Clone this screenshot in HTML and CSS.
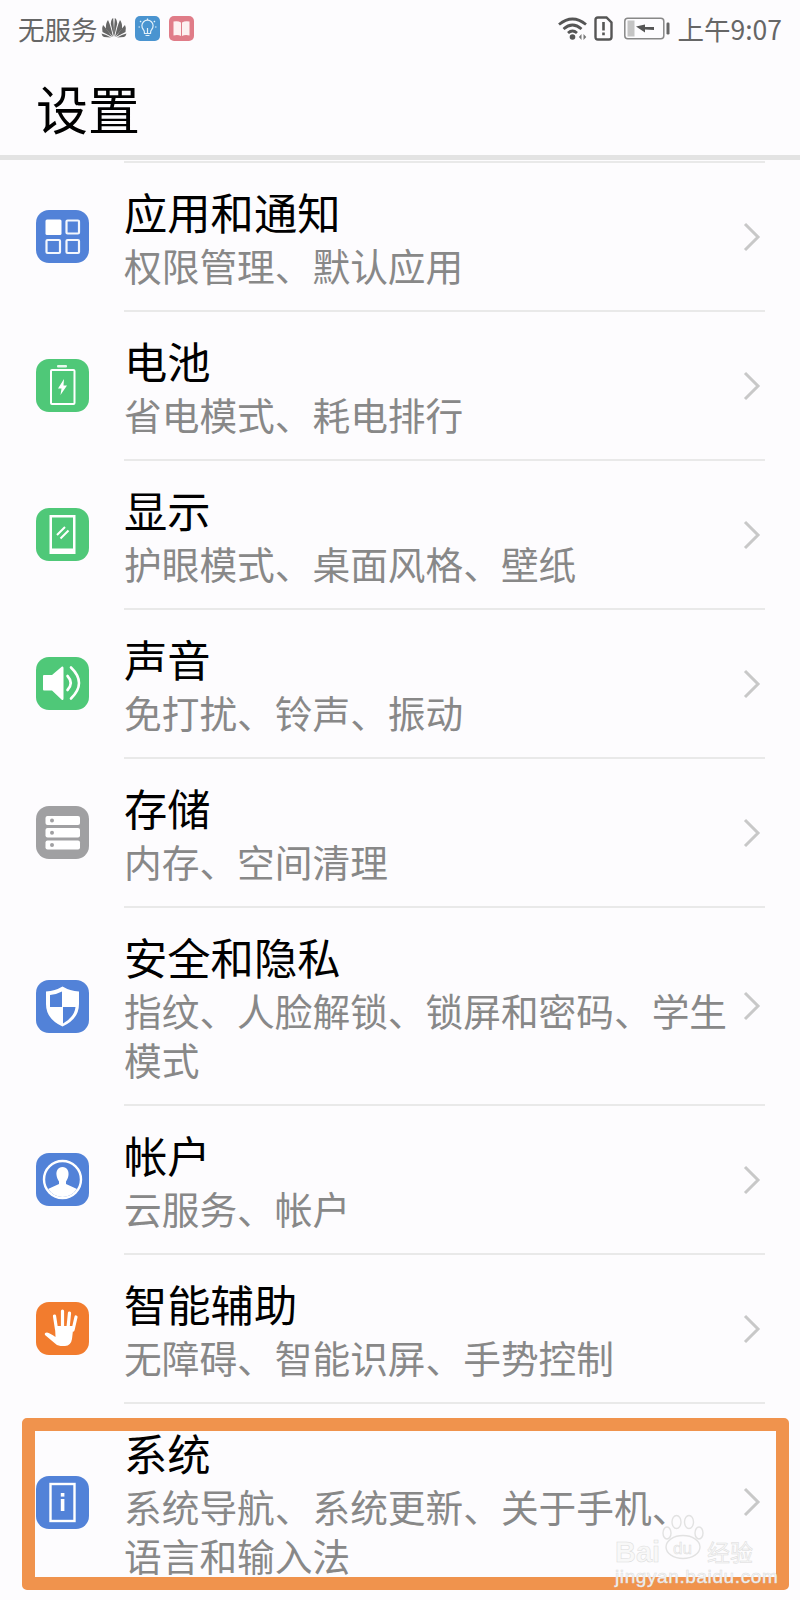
FILE: index.html
```html
<!DOCTYPE html>
<html lang="zh-CN">
<head>
  <meta charset="UTF-8">
  <meta name="viewport" content="width=device-width, initial-scale=1.0">
  <title>设置</title>
  <link rel="stylesheet" href="styles.css">
</head>
<body>
  <div class="statusbar">
    <div class="status-left">
      <span class="carrier">无服务</span>
      <svg class="logo" width="26" height="20" viewBox="0 0 26 20">
        <g fill="#666">
          <path d="M13 19 L9.8 6 Q10 1 12.2 0 Q13 9 13 19Z"/>
          <path d="M13 19 L16.2 6 Q16 1 13.8 0 Q13 9 13 19Z"/>
          <path d="M12 19 L5 11 Q4.5 5 7 2 Q9.5 7 12 19Z"/>
          <path d="M14 19 L21 11 Q21.5 5 19 2 Q16.5 7 14 19Z"/>
          <path d="M11 19 L1.5 14 Q0.5 10 2 7 Q6 11 11 19Z"/>
          <path d="M15 19 L24.5 14 Q25.5 10 24 7 Q20 11 15 19Z"/>
          <path d="M10 19.5 L3 19 Q1 18 0.5 15.5 Q5 16.5 10 19.5Z"/>
          <path d="M16 19.5 L23 19 Q25 18 25.5 15.5 Q21 16.5 16 19.5Z"/>
        </g>
      </svg>
      <svg class="notif" width="25" height="25" viewBox="0 0 25 25">
        <rect width="25" height="25" rx="5" fill="#4a94d0"/>
        <g fill="none" stroke="#e4f1fa" stroke-width="1.2">
          <path d="M9.5 17.5 Q9.5 14.5 8.3 13.5 A5.6 5.6 0 1 1 16.7 13.5 Q15.5 14.5 15.5 17.5Z"/>
          <path d="M10.5 19.5H14.5M12.5 17V12M12.5 2.5V4M5 5l1.2 1.2M20 5l-1.2 1.2M3.5 11H5M20 11h1.5"/>
        </g>
      </svg>
      <svg class="notif" width="25" height="25" viewBox="0 0 25 25">
        <rect width="25" height="25" rx="5" fill="#e07c88"/>
        <path d="M4.5 5.5 Q9 4.5 12 6.5V20 Q9 18.5 4.5 19.5Z" fill="#fdf0f0"/>
        <path d="M20.5 5.5 Q16 4.5 13 6.5V20 Q16 18.5 20.5 19.5Z" fill="#fdf0f0"/>
      </svg>
    </div>
    <div class="status-right">
      <svg width="30" height="25" viewBox="0 0 30 25">
        <g fill="none" stroke="#555" stroke-width="2.8">
          <path d="M1 8.5 Q14.5 -2.5 28 8.5"/>
          <path d="M5.5 13 Q14.5 5 23.5 13"/>
          <path d="M10 17 Q14.5 13 19 17"/>
        </g>
        <circle cx="14.5" cy="21" r="2.8" fill="#555"/>
        <path d="M23.5 18v6l-2.6-3zM25.5 18v6l2.8-3z" fill="#777"/>
      </svg>
      <svg class="sim" width="19" height="25" viewBox="0 0 19 25">
        <path d="M1.5 4 Q1.5 1.5 4 1.5H12.5L17.5 6.5V21 Q17.5 23.5 15 23.5H4 Q1.5 23.5 1.5 21Z" fill="none" stroke="#555" stroke-width="2.4"/>
        <path d="M8.2 6h2.6v8.5H8.2zM8.2 16.5h2.6v2.8H8.2z" fill="#555"/>
      </svg>
      <svg class="battery" width="46" height="23" viewBox="0 0 46 23">
        <rect x="0.8" y="1.2" width="39" height="20.5" rx="3" fill="none" stroke="#888" stroke-width="1.5"/>
        <rect x="3.5" y="3.5" width="7" height="16" fill="#c4c4c4"/>
        <path d="M12 9.5 L21 7.5 V10 H30 V13 L21 12.5 V15.5 Z" fill="#555"/>
        <rect x="42.5" y="5.5" width="3" height="12" rx="1.2" fill="#666"/>
      </svg>
      <span class="clock">上午9:07</span>
    </div>
  </div>

  <div class="header">设置</div>

  <div class="list">
    <div class="row">
      <svg class="icon" viewBox="0 0 53 53">
        <rect width="53" height="53" rx="13" fill="#5282d8"/>
        <rect x="9.5" y="9.5" width="16" height="15.5" rx="1.5" fill="#fff"/>
        <g fill="none" stroke="#f4f7fd" stroke-width="2.2">
          <rect x="30.5" y="10.5" width="12.5" height="13" rx="1"/>
          <rect x="10.5" y="30" width="13.5" height="13" rx="1"/>
          <rect x="30.5" y="30" width="12.5" height="13" rx="1"/>
        </g>
      </svg>
      <div class="body">
        <div class="text">
          <div class="name">应用和通知</div>
          <div class="desc">权限管理、默认应用</div>
        </div>
        <svg class="chevron" viewBox="0 0 18 30"><path d="M2 2 L15 15 L2 28"/></svg>
      </div>
    </div>

    <div class="row">
      <svg class="icon" viewBox="0 0 53 53">
        <rect width="53" height="53" rx="13" fill="#4fc878"/>
        <rect x="21" y="6" width="10" height="2.4" rx="1" fill="#e8f8ee"/>
        <rect x="15" y="11" width="23.5" height="34" rx="1" fill="none" stroke="#fff" stroke-width="2"/>
        <path d="M28 20 L22 29.5H25.5L24.5 36 L31 26.5H27.5Z" fill="#fff"/>
      </svg>
      <div class="body">
        <div class="text">
          <div class="name">电池</div>
          <div class="desc">省电模式、耗电排行</div>
        </div>
        <svg class="chevron" viewBox="0 0 18 30"><path d="M2 2 L15 15 L2 28"/></svg>
      </div>
    </div>

    <div class="row">
      <svg class="icon" viewBox="0 0 53 53">
        <rect width="53" height="53" rx="13" fill="#4fc878"/>
        <path d="M13.5 7H39.5V46H13.5Z M16 9.5V40.5H37V9.5Z" fill="#fff" fill-rule="evenodd"/>
        <path d="M21 27 L29 19M24.5 30.5 L32.5 22.5" stroke="#fff" stroke-width="2" fill="none"/>
      </svg>
      <div class="body">
        <div class="text">
          <div class="name">显示</div>
          <div class="desc">护眼模式、桌面风格、壁纸</div>
        </div>
        <svg class="chevron" viewBox="0 0 18 30"><path d="M2 2 L15 15 L2 28"/></svg>
      </div>
    </div>

    <div class="row">
      <svg class="icon" viewBox="0 0 53 53">
        <rect width="53" height="53" rx="13" fill="#4fc878"/>
        <path d="M7 19 Q7 18 8 18H16 L26 9.5 Q27.5 9 27.5 11V41.5 Q27.5 43.5 26 43 L16 33.5H8 Q7 33.5 7 32.5Z" fill="#fff"/>
        <g fill="none" stroke="#fff" stroke-width="2.6" stroke-linecap="round">
          <path d="M31.5 19 Q38 26 31.5 33"/>
          <path d="M35 10.5 Q51 26 35 41.5"/>
        </g>
      </svg>
      <div class="body">
        <div class="text">
          <div class="name">声音</div>
          <div class="desc">免打扰、铃声、振动</div>
        </div>
        <svg class="chevron" viewBox="0 0 18 30"><path d="M2 2 L15 15 L2 28"/></svg>
      </div>
    </div>

    <div class="row">
      <svg class="icon" viewBox="0 0 53 53">
        <rect width="53" height="53" rx="13" fill="#a0a0a2"/>
        <rect x="9.5" y="10" width="34.5" height="9" rx="2" fill="#fff"/>
        <rect x="9.5" y="22" width="34.5" height="9.5" rx="2" fill="#fff"/>
        <rect x="9.5" y="34.5" width="34.5" height="9" rx="2" fill="#fff"/>
        <g fill="#a0a0a2">
          <circle cx="16" cy="14.5" r="2"/>
          <circle cx="16" cy="26.7" r="2"/>
          <circle cx="16" cy="39" r="2"/>
        </g>
      </svg>
      <div class="body">
        <div class="text">
          <div class="name">存储</div>
          <div class="desc">内存、空间清理</div>
        </div>
        <svg class="chevron" viewBox="0 0 18 30"><path d="M2 2 L15 15 L2 28"/></svg>
      </div>
    </div>

    <div class="row">
      <svg class="icon" viewBox="0 0 53 53">
        <rect width="53" height="53" rx="13" fill="#5282d8"/>
        <path d="M26.5 6.5 Q34 11 43 11.5V24 Q43 39 26.5 46.5 Q10 39 10 24V11.5 Q19 11 26.5 6.5Z" fill="#fff"/>
        <path d="M26 11.5V27H14V15 Q20.5 14.5 26 11.5Z" fill="#5282d8"/>
        <path d="M27 27H39.5 Q38.5 37 27 43.5Z" fill="#5282d8"/>
      </svg>
      <div class="body">
        <div class="text">
          <div class="name">安全和隐私</div>
          <div class="desc">指纹、人脸解锁、锁屏和密码、学生<br>模式</div>
        </div>
        <svg class="chevron" viewBox="0 0 18 30"><path d="M2 2 L15 15 L2 28"/></svg>
      </div>
    </div>

    <div class="row">
      <svg class="icon" viewBox="0 0 53 53">
        <rect width="53" height="53" rx="13" fill="#5282d8"/>
        <circle cx="26.5" cy="26.5" r="18.5" fill="none" stroke="#fff" stroke-width="2.4"/>
        <path d="M26.5 14 C31 14 33 18 32.5 22 C32.2 25 31 27 30 28.5 V31 L41 36 Q35 44 26.5 44 Q18 44 12 36 L23 31 V28.5 C22 27 20.8 25 20.5 22 C20 18 22 14 26.5 14Z" fill="#fff"/>
      </svg>
      <div class="body">
        <div class="text">
          <div class="name">帐户</div>
          <div class="desc">云服务、帐户</div>
        </div>
        <svg class="chevron" viewBox="0 0 18 30"><path d="M2 2 L15 15 L2 28"/></svg>
      </div>
    </div>

    <div class="row">
      <svg class="icon" viewBox="0 0 53 53">
        <rect width="53" height="53" rx="13" fill="#f27c2e"/>
        <g fill="none" stroke="#fff" stroke-width="3.2" stroke-linecap="round">
          <path d="M18.5 14 L20.5 27"/>
          <path d="M26.5 9 V26"/>
          <path d="M33.5 11 L32 26"/>
          <path d="M40 15 L37 28"/>
        </g>
        <path d="M19 24 H37.5 L36 37 Q35 43.5 29 44 H24.5 Q21 44 18.5 41 L9 33 Q8 30.5 11 30.5 Q14 31 19.5 35Z" fill="#fff"/>
      </svg>
      <div class="body">
        <div class="text">
          <div class="name">智能辅助</div>
          <div class="desc">无障碍、智能识屏、手势控制</div>
        </div>
        <svg class="chevron" viewBox="0 0 18 30"><path d="M2 2 L15 15 L2 28"/></svg>
      </div>
    </div>

    <div class="row">
      <svg class="icon" viewBox="0 0 53 53">
        <rect width="53" height="53" rx="13" fill="#5282d8"/>
        <rect x="14.5" y="8" width="24" height="37" fill="none" stroke="#fff" stroke-width="2.4"/>
        <rect x="24.8" y="17" width="3.6" height="3.6" fill="#fff"/>
        <rect x="24.8" y="23" width="3.6" height="12" fill="#fff"/>
      </svg>
      <div class="body">
        <div class="text">
          <div class="name">系统</div>
          <div class="desc">系统导航、系统更新、关于手机、<br>语言和输入法</div>
        </div>
        <svg class="chevron" viewBox="0 0 18 30"><path d="M2 2 L15 15 L2 28"/></svg>
      </div>
    </div>
  </div>

  <div class="highlight"></div>

  <div class="watermark">
    <svg class="paw" width="44" height="46" viewBox="0 0 44 46">
      <g fill="none" stroke="#e2e2e2" stroke-width="1.4">
        <ellipse cx="5" cy="19" rx="4" ry="6"/>
        <ellipse cx="14.5" cy="8" rx="4.5" ry="6.5"/>
        <ellipse cx="27" cy="8" rx="4.5" ry="6.5"/>
        <ellipse cx="37" cy="19" rx="4" ry="6"/>
        <ellipse cx="21" cy="33" rx="17" ry="11.5"/>
      </g>
    </svg>
    <span class="wm-bai">Bai</span>
    <span class="wm-du">du</span>
    <span class="wm-cn">经验</span>
    <span class="wm-url">jingyan.baidu.com</span>
  </div>
</body>
</html>
```

FILE: styles.css
```css
body {
  margin: 0;
  height: 1600px;
  overflow: hidden;
  position: relative;
  background-color: #fdfcfe;
  font-family: "Noto Sans CJK SC", "Noto Sans", sans-serif;
}

.statusbar {
  height: 56px;
  display: flex;
  justify-content: space-between;
  align-items: center;
  padding: 0 18px;
  color: #666;
  font-size: 26.5px;
}
.status-left, .status-right {
  display: flex;
  align-items: center;
}
.logo {
  margin-left: 3px;
}
.notif {
  margin-left: 8px;
}
.notif + .notif {
  margin-left: 9px;
}
.sim {
  margin-left: 6px;
}
.battery {
  margin-left: 11px;
}
.clock {
  margin-left: 8px;
  white-space: nowrap;
}

.header {
  height: 99px;
  box-sizing: border-box;
  padding: 22px 0 0 36px;
  font-size: 52px;
  line-height: 60px;
  color: #000;
}

.list {
  border-top: 5px solid #e3e3e3;
  padding-top: 1px;
}

.row {
  display: flex;
  align-items: center;
  padding-left: 36px;
}
.icon {
  width: 53px;
  height: 53px;
  flex-shrink: 0;
  margin-top: 2px;
  margin-right: 35px;
}
.body {
  flex: 1;
  margin-right: 35px;
  display: flex;
  align-items: center;
  justify-content: space-between;
  border-top: 2px solid #e9e9e9;
  padding: 19px 0 21px;
}
.name {
  font-size: 43.3px;
  line-height: 58px;
  color: #000;
}
.desc {
  font-size: 37.7px;
  line-height: 49px;
  color: #888;
  white-space: nowrap;
}
.chevron {
  width: 18px;
  height: 30px;
  margin-top: 2px;
  margin-right: 4px;
  fill: none;
  stroke: #c8c8c8;
  stroke-width: 3;
}

.highlight {
  position: absolute;
  left: 22px;
  top: 1418px;
  width: 767px;
  height: 172px;
  box-sizing: border-box;
  border: 13px solid #f0934d;
  border-radius: 5px;
}

.watermark {
  position: absolute;
  left: 612px;
  top: 1512px;
  width: 150px;
  height: 72px;
  font-family: "Liberation Sans", sans-serif;
  color: #f8f8f8;
  -webkit-text-stroke: 0.5px #dcdcdc;
}
.watermark span {
  position: absolute;
  white-space: nowrap;
}
.paw {
  position: absolute;
  left: 50px;
  top: 2px;
}
.wm-bai {
  left: 3px;
  top: 24px;
  font-size: 29px;
  line-height: 33px;
  font-weight: bold;
}
.wm-du {
  left: 61px;
  top: 27px;
  font-size: 17px;
  line-height: 20px;
}
.wm-cn {
  left: 95px;
  top: 24px;
  font-size: 23px;
  line-height: 30px;
  font-family: "Noto Sans CJK SC", sans-serif;
}
.wm-url {
  left: 3px;
  top: 54px;
  font-size: 19px;
  line-height: 22px;
  letter-spacing: 0.6px;
}
```
